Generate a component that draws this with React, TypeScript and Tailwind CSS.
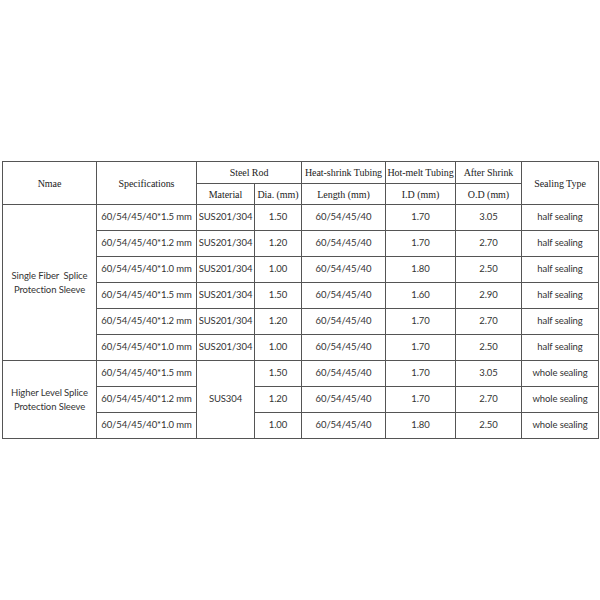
import React from "react";

const serif = { fontFamily: '"Liberation Serif", "Times New Roman", serif' };

const single = [
  ["60/54/45/40*1.5 mm", "SUS201/304", "1.50", "60/54/45/40", "1.70", "3.05", "half sealing"],
  ["60/54/45/40*1.2 mm", "SUS201/304", "1.20", "60/54/45/40", "1.70", "2.70", "half sealing"],
  ["60/54/45/40*1.0 mm", "SUS201/304", "1.00", "60/54/45/40", "1.80", "2.50", "half sealing"],
  ["60/54/45/40*1.5 mm", "SUS201/304", "1.50", "60/54/45/40", "1.60", "2.90", "half sealing"],
  ["60/54/45/40*1.2 mm", "SUS201/304", "1.20", "60/54/45/40", "1.70", "2.70", "half sealing"],
  ["60/54/45/40*1.0 mm", "SUS201/304", "1.00", "60/54/45/40", "1.70", "2.50", "half sealing"],
];

const higher = [
  ["60/54/45/40*1.5 mm", "1.50", "60/54/45/40", "1.70", "3.05", "whole sealing"],
  ["60/54/45/40*1.2 mm", "1.20", "60/54/45/40", "1.70", "2.70", "whole sealing"],
  ["60/54/45/40*1.0 mm", "1.00", "60/54/45/40", "1.80", "2.50", "whole sealing"],
];

const td = "border border-[#555] text-center align-middle p-0 h-[26px] whitespace-nowrap";
const th = "border border-[#555] text-center align-middle p-0 font-normal whitespace-nowrap";

export default function App() {
  return (
    <div className="w-[600px] h-[600px] bg-white pt-[161px] pl-[2px]">
      <table
        className="table-fixed border-collapse text-[9.5px] tracking-[-0.1px] text-[#333] w-[596px]"
        style={{ fontFamily: '"Lato", "Open Sans", sans-serif' }}
      >
        <colgroup>
          <col className="w-[94px]" />
          <col className="w-[100px]" />
          <col className="w-[58px]" />
          <col className="w-[47px]" />
          <col className="w-[84px]" />
          <col className="w-[70px]" />
          <col className="w-[66px]" />
          <col className="w-[77px]" />
        </colgroup>
        <thead className="text-[10px] tracking-[-0.05px] text-[#222]" style={serif}>
          <tr className="h-[22px]">
            <th rowSpan={2} className={th}>Nmae</th>
            <th rowSpan={2} className={th}>Specifications</th>
            <th colSpan={2} className={th}>Steel Rod</th>
            <th className={th}>Heat-shrink Tubing</th>
            <th className={th}>Hot-melt Tubing</th>
            <th className={th}>After Shrink</th>
            <th rowSpan={2} className={th}>Sealing Type</th>
          </tr>
          <tr className="h-[21px]">
            <th className={th}>Material</th>
            <th className={th}>Dia. (mm)</th>
            <th className={th}>Length (mm)</th>
            <th className={th}>I.D (mm)</th>
            <th className={th}>O.D (mm)</th>
          </tr>
        </thead>
        <tbody>
          {single.map((r, i) => (
            <tr key={"s" + i}>
              {i === 0 && (
                <td rowSpan={6} className={td + " whitespace-normal leading-[14px]"}>
                  Single Fiber&nbsp; Splice
                  <br />
                  Protection Sleeve
                </td>
              )}
              {r.map((c, j) => (
                <td key={j} className={td}>{c}</td>
              ))}
            </tr>
          ))}
          {higher.map((r, i) => (
            <tr key={"h" + i}>
              {i === 0 && (
                <td rowSpan={3} className={td + " whitespace-normal leading-[14px]"}>
                  Higher Level Splice
                  <br />
                  Protection Sleeve
                </td>
              )}
              <td className={td}>{r[0]}</td>
              {i === 0 && (
                <td rowSpan={3} className={td}>SUS304</td>
              )}
              {r.slice(1).map((c, j) => (
                <td key={j} className={td}>{c}</td>
              ))}
            </tr>
          ))}
        </tbody>
      </table>
    </div>
  );
}
